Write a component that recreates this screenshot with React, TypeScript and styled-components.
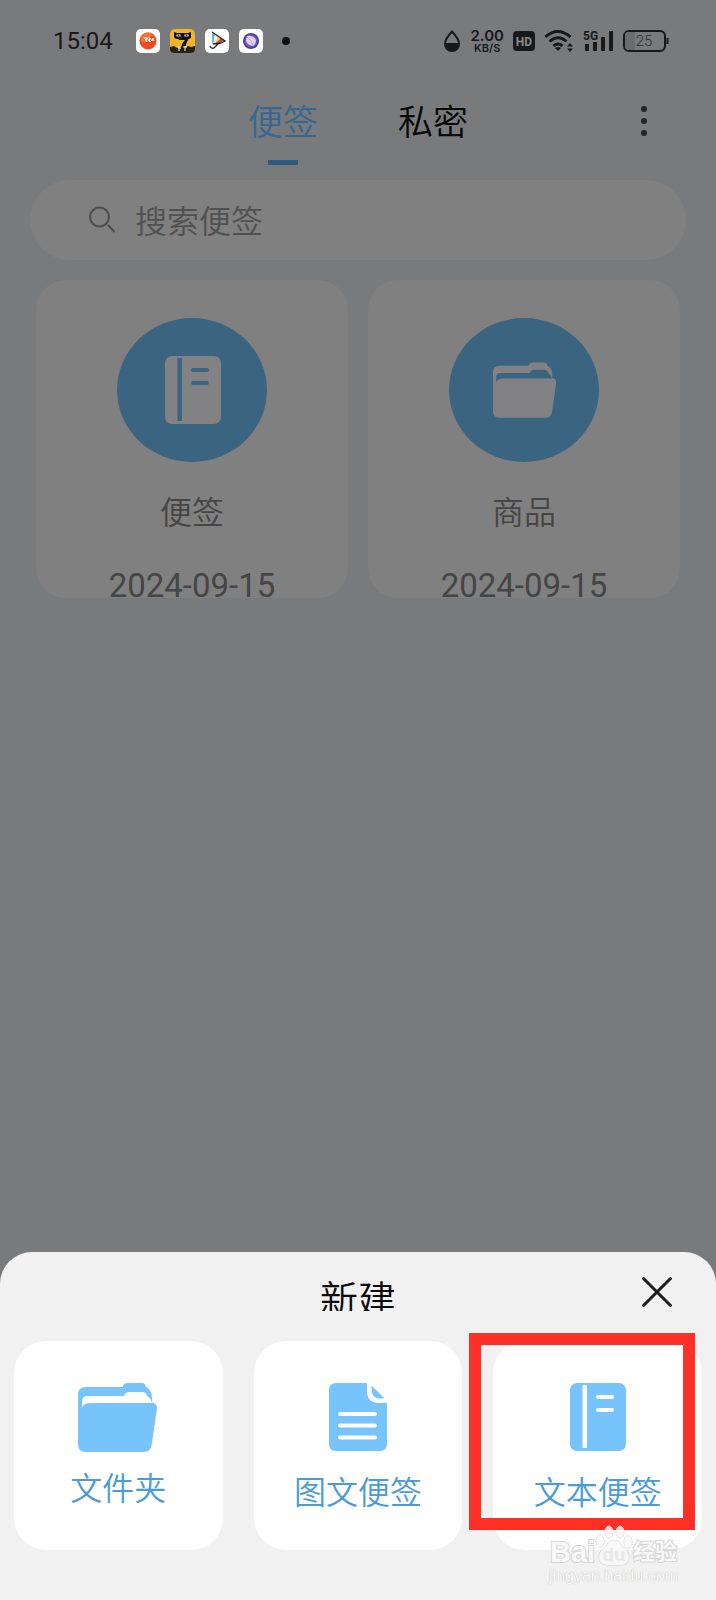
import React from "react";
import styled, { createGlobalStyle } from "styled-components";

const GlobalStyle = createGlobalStyle`
  * { box-sizing: border-box; }
  body {
    margin: 0;
    background: #797a7c;
    font-family: Roboto, "Noto Sans CJK SC", sans-serif;
    font-weight: 350;
  }
  button, input {
    font: inherit;
    color: inherit;
    background: none;
    border: 0;
    padding: 0;
    margin: 0;
  }
  h2, p { margin: 0; font-weight: inherit; }
`;

const Screen = styled.div`
  min-height: 100vh;
  display: flex;
  flex-direction: column;
  background: #797a7c;
`;

const StatusBar = styled.header`
  height: 82px;
  padding: 0 47px 0 53px;
  display: flex;
  align-items: center;
  color: #17181a;
`;

const Time = styled.span`
  width: 83px;
  font-size: 24px;
  line-height: 32px;
  font-weight: 400;
`;

const AppIcons = styled.div`
  display: flex;
  align-items: center;
  gap: 10px;
  flex: 1;
`;

const SystemIcons = styled.div`
  display: flex;
  align-items: center;
  gap: 9px;
`;

const Speed = styled.div`
  display: flex;
  flex-direction: column;
  align-items: center;
  font-family: Inter, sans-serif;
  font-weight: 600;
  font-size: 11px;
  line-height: 11px;
`;

const SpeedValue = styled.span`
  font-size: 15px;
  line-height: 14px;
`;

const TopNav = styled.nav`
  display: grid;
  grid-template-columns: 1fr auto 1fr;
  align-items: start;
  padding: 18px 59px 15px;
`;

const Tabs = styled.div`
  grid-column: 2;
  display: flex;
  gap: 80px;
`;

const Tab = styled.button<{ $active?: boolean }>`
  display: flex;
  flex-direction: column;
  align-items: center;
  gap: 12px;
  font-size: 35px;
  line-height: 48px;
  color: ${(p) => (p.$active ? "#356790" : "#060606")};

  &::after {
    content: "";
    width: 30px;
    height: 5px;
    background: ${(p) => (p.$active ? "#2c5a80" : "transparent")};
  }
`;

const MoreButton = styled.button`
  justify-self: end;
  height: 42px;
  width: 26px;
  display: flex;
  align-items: center;
  justify-content: center;
`;

const SearchBox = styled.label`
  display: flex;
  align-items: center;
  gap: 18px;
  height: 80px;
  margin: 0 30px;
  padding: 0 59px;
  border-radius: 40px;
  background: #808080;
  color: #4d4d4d;
`;

const SearchInput = styled.input`
  flex: 1;
  min-width: 0;
  height: 48px;
  padding-top: 4px;
  font-size: 32px;
  outline: 0;
  &::placeholder { color: #505050; opacity: 1; }
`;

const NoteGrid = styled.main`
  flex: 1;
  display: grid;
  grid-template-columns: 1fr 1fr;
  align-content: start;
  gap: 20px;
  padding: 20px 36px;
`;

const NoteCard = styled.article`
  display: flex;
  flex-direction: column;
  align-items: center;
  padding-top: 38px;
  border-radius: 30px;
  background: #808080;
  color: #454545;
`;

const NoteName = styled.h2`
  margin-top: 31px;
  font-size: 32px;
  line-height: 40px;
`;

const NoteDate = styled.time`
  margin-top: 40px;
  font-size: 33px;
  font-weight: 400;
  line-height: 25px;
`;

const Sheet = styled.section`
  position: relative;
  padding: 0 14px 50px;
  border-radius: 32px 32px 0 0;
  background: #f1f1f1;
`;

const SheetHead = styled.div`
  display: grid;
  grid-template-columns: 1fr auto 1fr;
  align-items: start;
  padding: 25px 30px 30px;
`;

const SheetTitle = styled.h2`
  grid-column: 2;
  margin-top: 4px;
  height: 30px;
  overflow: hidden;
  font-size: 38px;
  line-height: 38px;
  color: #0a0a0a;
`;

const CloseButton = styled.button`
  justify-self: end;
  display: flex;
`;

const Actions = styled.div`
  display: grid;
  grid-template-columns: repeat(3, 1fr);
  gap: 31px;
`;

const Action = styled.button<{ $gap: number }>`
  position: relative;
  display: flex;
  flex-direction: column;
  align-items: center;
  justify-content: flex-start;
  gap: ${(p) => p.$gap}px;
  min-height: 209px;
  padding-top: 42px;
  border-radius: 32px;
  background: #fff;
  color: #4a9bd6;
  font-size: 32px;
  line-height: 40px;
  white-space: nowrap;
`;

const Highlight = styled.span`
  position: absolute;
  top: -8px;
  left: -24px;
  right: 7px;
  height: 197px;
  border: 12px solid #fc3027;
`;

const Watermark = styled.div`
  position: absolute;
  right: 38px;
  bottom: 14px;
  display: flex;
  flex-direction: column;
  align-items: center;
  font-family: "Liberation Sans", "Noto Sans CJK SC", sans-serif;
  color: #f8f8f8;
`;

const Brand = styled.div`
  display: flex;
  align-items: flex-end;
  font-size: 29px;
  line-height: 28px;
  font-weight: 700;
  -webkit-text-stroke: 2px #d6d6d6;
  paint-order: stroke fill;
`;

const BrandCjk = styled.span`
  font-size: 22px;
`;

const Site = styled.p`
  font-size: 16px;
  line-height: 20px;
  font-weight: 400;
  text-shadow: 0 0 1px #c4c4c4, 0 0 1px #d4d4d4;
`;

const Book = ({ fill, line }: { fill: string; line: string }) => (
  <>
    <rect width="56" height="68" rx="7" fill={fill} />
    <path d="M12.500 2h4.500v63h-4.500z" fill={line} />
    <path d="M28 14h14M28 27h14" stroke={line} strokeWidth="4" strokeLinecap="round" />
  </>
);

const Folder = ({ fill }: { fill: string }) => (
  <path
    fill={fill}
    d="M0 12q0-8 8-8h37q0-4 5-4h14q3 0 4 4 6 3 6 11v4.500q5 .5 5 5.500l-5 35q-1 9-8 9H8q-8 0-8-8zM4 25q1-5 9-5h61q-1-5-5-7-1-4-5-4H52q-5 0-6 4H10q-5 0-6 4z"
    fillRule="evenodd"
  />
);

const BookBadge = () => (
  <svg width="150" height="144" viewBox="0 0 150 144" aria-hidden="true">
    <ellipse cx="75" cy="72" rx="75" ry="72" fill="#3b6481" />
    <g transform="translate(48 38)">
      <Book fill="#828284" line="#3b6481" />
    </g>
  </svg>
);

const FolderBadge = () => (
  <svg width="150" height="144" viewBox="0 0 150 144" aria-hidden="true">
    <ellipse cx="75" cy="72" rx="75" ry="72" fill="#3b6481" />
    <g transform="translate(44 44.500) scale(.8)">
      <Folder fill="#828284" />
    </g>
  </svg>
);

const FolderIcon = () => (
  <svg width="80" height="69" viewBox="0 0 80 69" aria-hidden="true">
    <Folder fill="#76c4fb" />
  </svg>
);

const DocumentIcon = () => (
  <svg width="58" height="69" viewBox="0 0 58 69" aria-hidden="true">
    <path d="M7 0h31v8q0 12 12 12h8v41q0 7-7 7H7q-7 0-7-7V7q0-7 7-7z" fill="#76c4fb" />
    <path d="M43 3.500 54.500 15Q42 17 43 3.500z" fill="#76c4fb" stroke="#76c4fb" strokeLinejoin="round" />
    <path d="M11 31h35M11 42.500h35M11 54.500h35" stroke="#fff" strokeWidth="4" strokeLinecap="round" />
  </svg>
);

const BookIcon = () => (
  <svg width="56" height="69" viewBox="0 0 56 69" aria-hidden="true">
    <Book fill="#76c4fb" line="#fff" />
  </svg>
);

const StatusApps = () => (
  <>
    <svg width="24" height="24" viewBox="0 0 24 24" aria-hidden="true">
      <rect width="24" height="24" rx="5" fill="#fff" />
      <circle cx="12" cy="12" r="8.500" fill="#ec4a1c" />
      <path d="M4 9a8.500 8.500 0 0 1 14-3q-5 1-8 6t-6-3z" fill="#f9702a" />
      <path d="m8 8 3 5-1-5 4 5-1-5 3 4 1-3 1 3" fill="none" stroke="#fff" strokeWidth="1" />
    </svg>
    <svg width="25" height="24" viewBox="0 0 25 24" aria-hidden="true">
      <rect width="25" height="24" rx="5" fill="#f0b424" />
      <path d="M4 3l3 1h11l3-1v6q-3 2-8 1Q5 11 4 8z" fill="#14110a" />
      <path d="M9 8h11q-4 5-5 12h-4q0-5 4-9H9z" fill="#14110a" />
      <path d="M0 18l4-1 3 2 3-1 4 1 4-2 3 1 4-1v3q0 4-5 4H5q-5 0-5-4z" fill="#29210e" />
      <path d="M6.500 6.500h4M14.500 6.500h4" stroke="#fff" strokeWidth="2" />
      <path d="M9 17v5M8 19h3M13 18h4M15 17v5" stroke="#fff" strokeWidth="1" />
      <circle cx="8.500" cy="6.500" r="1" fill="#14110a" />
      <circle cx="16.500" cy="6.500" r="1" fill="#14110a" />
    </svg>
    <svg width="24" height="24" viewBox="0 0 24 24" aria-hidden="true">
      <rect width="24" height="24" rx="5" fill="#fff" />
      <path d="M7 4l3 .5-1 10H7z" fill="#5cc0cc" />
      <path d="M10 5l3 2-3 8H8z" fill="#eef0f0" />
      <path d="M13 7l3 2-6 6z" fill="#f1d04b" />
      <path d="M16 9l3 3-9 3z" fill="#d83b46" />
      <path d="M7 3l13 9-4 2-8 1M14 14l-5 5q-3 1-4-2" fill="none" stroke="#20252e" strokeWidth="1.300" />
    </svg>
    <svg width="24" height="24" viewBox="0 0 24 24" aria-hidden="true">
      <rect width="24" height="24" rx="5" fill="#fff" />
      <circle cx="12" cy="12" r="8" fill="#4a3f98" />
      <circle cx="12" cy="12" r="6.500" fill="#6a58bc" />
      <path d="M8 7q6-1 9 4 0 4-3 6-7-1-7-6z" fill="#e2d0f6" />
      <path d="M8 8q5 3 6 9" stroke="#c4abe8" fill="none" />
    </svg>
    <svg width="24" height="24" viewBox="0 0 24 24" aria-hidden="true">
      <circle cx="13" cy="12" r="4" fill="#0c0d0e" />
    </svg>
  </>
);

const Droplet = () => (
  <svg width="18" height="24" viewBox="0 0 18 24" aria-hidden="true">
    <path d="M9 2.500Q2 10 2 15a7 7 0 0 0 14 0q0-5-7-12.500z" fill="none" stroke="#17181a" strokeWidth="2" />
    <path d="M2 14h14q0 8-7 8t-7-8z" fill="#17181a" />
  </svg>
);

const HdBadge = () => (
  <svg width="22" height="20" viewBox="0 0 22 20" role="img" aria-label="HD">
    <rect width="22" height="20" rx="4" fill="#17181a" />
    <text x="11" y="15" textAnchor="middle" fontFamily="Roboto, sans-serif" fontWeight="700" fontSize="12" fill="#8a8b8d">HD</text>
  </svg>
);

const Wifi = () => (
  <svg width="30" height="24" viewBox="0 0 30 24" aria-hidden="true">
    <path d="M1.500 8q12-11 25 0M5.500 12.500q8.500-7.500 17 0M9.500 17q4.500-4 9 0" fill="none" stroke="#17181a" strokeWidth="3" />
    <path d="m14 22-3-3q3-2 6 0z" fill="#17181a" />
    <path d="m26 14 3 3.500h-6zM26 23l3-3.500h-6z" fill="#17181a" />
  </svg>
);

const Signal = () => (
  <svg width="31" height="24" viewBox="0 0 31 24" role="img" aria-label="5G">
    <text x="0" y="11" fontFamily="Roboto, sans-serif" fontWeight="700" fontSize="12" fill="#17181a">5G</text>
    <path d="M4 15v7M12 13v9M20 8v14M28 2v20" stroke="#17181a" strokeWidth="4" />
  </svg>
);

const Battery = () => (
  <svg width="46" height="24" viewBox="0 0 46 24" role="img" aria-label="25%">
    <rect x="1" y="2" width="41" height="20" rx="5" fill="none" stroke="#17181a" strokeWidth="2" />
    <path d="M6 3h6v18H6q-4 0-4-4V7q0-4 4-4z" fill="#6b6c6e" />
    <path d="M44.500 9v6" stroke="#17181a" strokeWidth="2" />
    <text x="21" y="17" textAnchor="middle" fontFamily="Roboto, sans-serif" fontSize="15" fill="#2c2d2f">25</text>
  </svg>
);

const Paw = () => (
  <svg width="38" height="41" viewBox="0 0 38 41" role="img" aria-label="du">
    <g fill="#f8f8f8" fillOpacity="0.8" stroke="#d0d0d0" strokeWidth="1">
      <ellipse cx="5" cy="16" rx="4" ry="6" />
      <ellipse cx="14" cy="7" rx="4" ry="6" />
      <ellipse cx="25" cy="7" rx="4" ry="6" />
      <ellipse cx="33" cy="17" rx="4" ry="6" />
      <path d="M19 15q5 0 8 6 7 5 7 11 0 8-8 8H12q-8 0-8-8 0-6 7-11 3-6 8-6z" />
    </g>
    <text x="19" y="36" textAnchor="middle" fontSize="19" fontWeight="700" fill="#e8e8e8">du</text>
  </svg>
);

export default function App() {
  return (
    <Screen>
      <GlobalStyle />
      <StatusBar>
        <Time>15:04</Time>
        <AppIcons>
          <StatusApps />
        </AppIcons>
        <SystemIcons>
          <Droplet />
          <Speed>
            <SpeedValue>2.00</SpeedValue>
            <span>KB/S</span>
          </Speed>
          <HdBadge />
          <Wifi />
          <Signal />
          <Battery />
        </SystemIcons>
      </StatusBar>

      <TopNav>
        <Tabs>
          <Tab type="button" $active>便签</Tab>
          <Tab type="button">私密</Tab>
        </Tabs>
        <MoreButton type="button" aria-label="更多">
          <svg width="8" height="32" viewBox="0 0 8 32" fill="#242528" aria-hidden="true">
            <circle cx="4" cy="4" r="3" />
            <circle cx="4" cy="16" r="3" />
            <circle cx="4" cy="28" r="3" />
          </svg>
        </MoreButton>
      </TopNav>

      <SearchBox>
        <svg width="28" height="28" viewBox="0 0 28 28" fill="none" stroke="currentColor" strokeWidth="2" aria-hidden="true">
          <circle cx="10.500" cy="11" r="9.500" />
          <path d="m19 19 6.500 7" />
        </svg>
        <SearchInput type="text" placeholder="搜索便签" aria-label="搜索便签" />
      </SearchBox>

      <NoteGrid>
        <NoteCard>
          <BookBadge />
          <NoteName>便签</NoteName>
          <NoteDate>2024-09-15</NoteDate>
        </NoteCard>
        <NoteCard>
          <FolderBadge />
          <NoteName>商品</NoteName>
          <NoteDate>2024-09-15</NoteDate>
        </NoteCard>
      </NoteGrid>

      <Sheet role="dialog" aria-label="新建">
        <SheetHead>
          <SheetTitle>新建</SheetTitle>
          <CloseButton type="button" aria-label="关闭">
            <svg width="30" height="30" viewBox="0 0 30 30" stroke="#1c1c1c" strokeWidth="3" strokeLinecap="round" aria-hidden="true">
              <path d="m1.500 1.500 27 27M28.500 1.500l-27 27" />
            </svg>
          </CloseButton>
        </SheetHead>
        <Actions>
          <Action type="button" $gap={17}>
            <FolderIcon />
            文件夹
          </Action>
          <Action type="button" $gap={21}>
            <DocumentIcon />
            图文便签
          </Action>
          <Action type="button" $gap={21}>
            <BookIcon />
            文本便签
            <Highlight />
          </Action>
        </Actions>
        <Watermark>
          <Brand>
            <span>Bai</span>
            <Paw />
            <BrandCjk>经验</BrandCjk>
          </Brand>
          <Site>jingyan.baidu.com</Site>
        </Watermark>
      </Sheet>
    </Screen>
  );
}
